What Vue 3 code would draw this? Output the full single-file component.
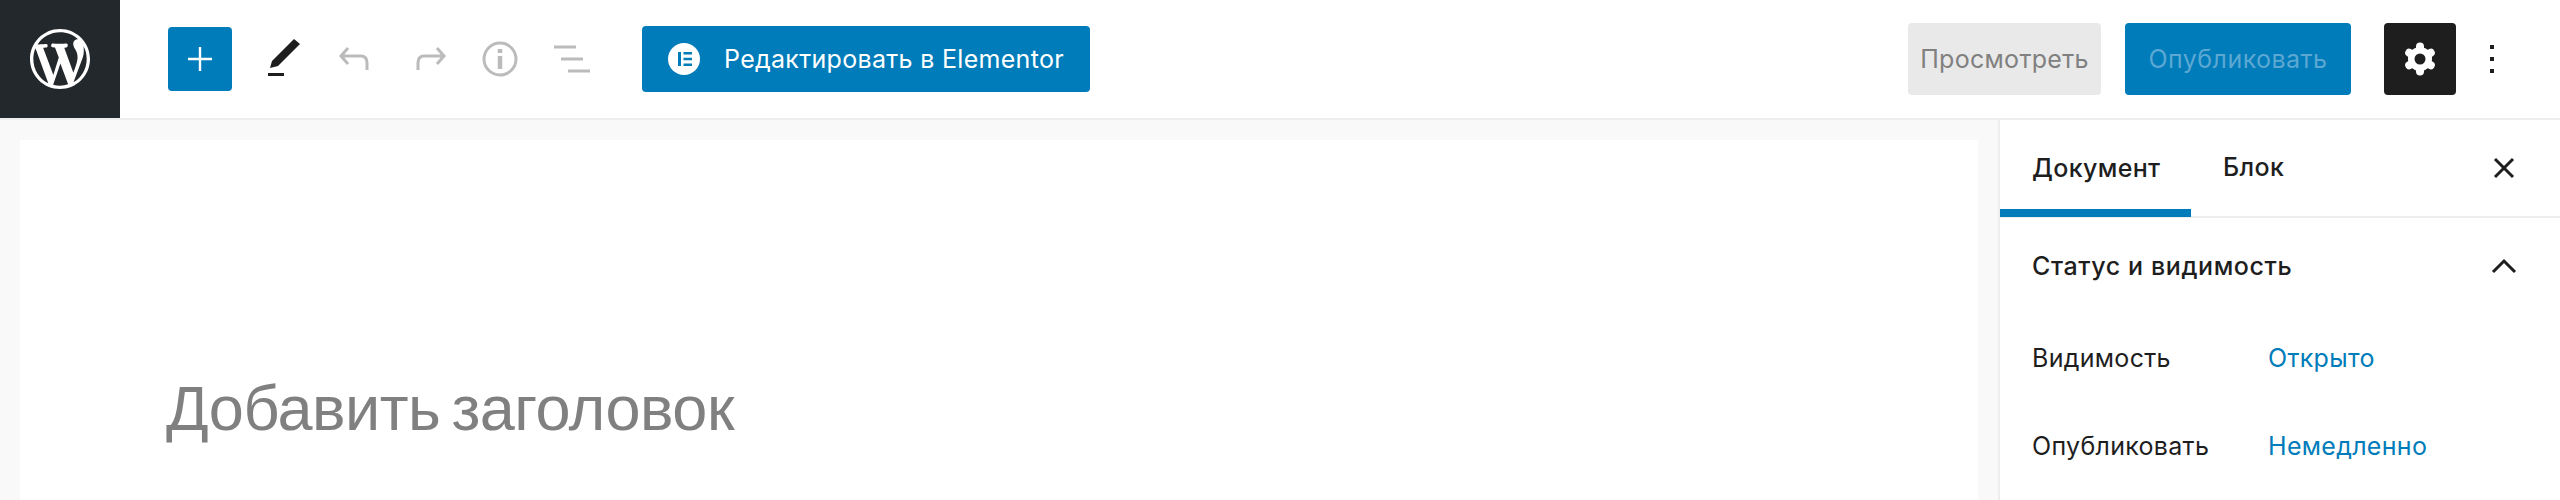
<script setup>
const rows = [
  { label: 'Видимость', value: 'Открыто' },
  { label: 'Опубликовать', value: 'Немедленно' },
]
</script>

<template>
  <div class="editor">
    <header class="topbar">
      <a class="logo">
        <svg width="60" height="60" viewBox="0 0 20 20" fill="#fff">
          <path d="M20 10c0-5.51-4.49-10-10-10C4.48 0 0 4.49 0 10c0 5.52 4.48 10 10 10 5.51 0 10-4.48 10-10zM7.78 15.37L4.37 6.22c.55-.02 1.17-.08 1.17-.08.5-.06.44-1.13-.06-1.11 0 0-1.45.11-2.37.11-.18 0-.37 0-.58-.01C4.12 2.69 6.87 1.11 10 1.11c2.33 0 4.45.87 6.05 2.34-.68-.11-1.65.39-1.65 1.58 0 .74.45 1.36.9 2.1.35.61.55 1.36.55 2.46 0 1.49-1.4 5-1.4 5l-3.03-8.37c.54-.02.82-.17.82-.17.5-.05.44-1.25-.06-1.22 0 0-1.44.12-2.38.12-.87 0-2.33-.12-2.33-.12-.5-.03-.56 1.2-.06 1.22l.92.08 1.26 3.41zM17.41 10c.24-.64.74-1.87.43-4.25.7 1.29 1.05 2.71 1.05 4.25 0 3.29-1.73 6.24-4.4 7.78.97-2.59 1.94-5.2 2.92-7.78zM6.1 18.09C3.12 16.65 1.11 13.53 1.11 10c0-1.3.23-2.48.72-3.59C3.25 10.3 4.67 14.2 6.1 18.09zm4.03-6.63l2.58 6.98c-.86.29-1.76.45-2.71.45-.79 0-1.57-.11-2.29-.33.81-2.38 1.62-4.74 2.42-7.1z"/>
        </svg>
      </a>
      <div class="tools">
        <button class="add">
          <svg width="48" height="48" viewBox="0 0 48 48" fill="#fff"><path d="M22.800 12h2.400v10.800H36v2.400H25.200V36h-2.400V25.200H12v-2.400h10.800z"/></svg>
        </button>
        <svg class="pen" width="48" height="48" viewBox="0 0 48 48" fill="#1e1e1e"><path d="M34 4l6 5-22 22-8 2 2-7zM8 38h16v3H8z"/></svg>
        <svg class="ico" width="48" height="48" viewBox="0 0 48 48"><path d="M16 13l-7 8 7 8M9 21h20c4 0 6 2.500 6 7v7"/></svg>
        <svg class="ico" width="48" height="48" viewBox="0 0 48 48"><path d="M33 13l7 8-7 8M40 21H20c-4 0-6 2.500-6 7v7"/></svg>
        <svg class="ico" width="48" height="48" viewBox="0 0 48 48"><circle cx="24" cy="24" r="16"/><path d="M24 14v4M24 21v13" stroke-width="4.500"/></svg>
        <svg class="ico" width="48" height="48" viewBox="0 0 48 48"><path d="M6 12h22M13 24h22M20 36h22"/></svg>
        <button class="elementor">
          <svg width="32" height="32" viewBox="0 0 32 32"><circle cx="16" cy="16" r="16" fill="#fff"/><path fill="#007cba" d="M10 9h3v14h-3zM15.500 9H24v2.500h-8.500zM15.500 14.800H24v2.400h-8.500zM15.500 20.500H24V23h-8.500z"/></svg>
          Редактировать в Elementor
        </button>
      </div>
      <div class="actions">
        <button class="preview">Просмотреть</button>
        <button class="publish">Опубликовать</button>
        <button class="settings">
          <svg width="40" height="40" viewBox="-20 -20 40 40">
            <g stroke="#fff" stroke-width="8" stroke-linecap="round">
              <path d="M0-12.500V12.500M-10.800-6.200L10.800 6.200M-10.800 6.200L10.800-6.200"/>
            </g>
            <circle r="12" fill="#fff"/>
            <circle r="5.500" fill="#1e1e1e"/>
          </svg>
        </button>
        <svg class="more" width="48" height="48" viewBox="0 0 48 48" fill="#1e1e1e"><path d="M22 10h4v4h-4zM22 22h4v4h-4zM22 34h4v4h-4z"/></svg>
      </div>
    </header>
    <div class="body">
      <main class="canvas">
        <div class="page">
          <h1 class="title">Добавить заголовок</h1>
        </div>
      </main>
      <aside class="sidebar">
        <div class="tabs">
          <div class="tab active">Документ</div>
          <div class="tab">Блок</div>
          <svg class="close" width="48" height="48" viewBox="0 0 48 48"><path d="M15 15l18 18M33 15L15 33"/></svg>
        </div>
        <div class="panel-head">
          <span>Статус и видимость</span>
          <svg class="chevron" width="48" height="48" viewBox="0 0 48 48"><path d="M13 30l11-11 11 11"/></svg>
        </div>
        <div v-for="row in rows" :key="row.label" class="row">
          <span class="label">{{ row.label }}</span>
          <span class="value">{{ row.value }}</span>
        </div>
      </aside>
    </div>
  </div>
</template>

<style scoped>
.editor {
  width: 2560px;
  height: 500px;
  overflow: hidden;
  font-family: Inter, Roboto, "Liberation Sans", sans-serif;
  letter-spacing: 0.3px;
  background: #fff;
}
button {
  font-family: inherit;
  letter-spacing: inherit;
  border: 0;
  padding: 0;
}
.topbar {
  display: flex;
  align-items: center;
  height: 118px;
  border-bottom: 2px solid #eee;
}
.logo {
  width: 120px;
  height: 118px;
  flex: none;
  background: #23282d;
  display: flex;
  align-items: center;
  justify-content: center;
}
.tools {
  display: flex;
  align-items: center;
  gap: 24px;
  padding-left: 48px;
}
.add {
  width: 64px;
  height: 64px;
  background: #007cba;
  border-radius: 4px;
  display: flex;
  align-items: center;
  justify-content: center;
}
.pen {
  margin-left: 4px;
}
.ico {
  fill: none;
  stroke: #bbb;
  stroke-width: 3;
}
.elementor {
  margin-left: 22px;
  width: 448px;
  height: 66px;
  background: #007cba;
  color: #fff;
  border-radius: 4px;
  font-size: 25px;
  display: flex;
  align-items: center;
  padding-left: 26px;
  gap: 24px;
}
.actions {
  margin-left: auto;
  display: flex;
  align-items: center;
  padding-right: 44px;
}
.preview {
  width: 193px;
  height: 72px;
  background: #e9e9e9;
  color: #808080;
  border-radius: 4px;
  font-size: 25px;
}
.publish {
  width: 226px;
  height: 72px;
  margin-left: 24px;
  background: #007cba;
  color: #5ca8d2;
  border-radius: 4px;
  font-size: 25px;
  letter-spacing: 0.45px;
}
.settings {
  width: 72px;
  height: 72px;
  margin-left: 33px;
  background: #1e1e1e;
  border-radius: 4px;
  display: flex;
  align-items: center;
  justify-content: center;
}
.more {
  margin-left: 12px;
}
.body {
  display: flex;
  height: 380px;
  background: #f9f9f9;
}
.canvas {
  flex: 1;
  padding: 20px 20px 0;
}
.page {
  height: 100%;
  background: #fff;
  padding: 231px 0 0 146px;
  box-sizing: border-box;
}
.title {
  margin: 0;
  font-family: "Liberation Sans", Arial, sans-serif;
  font-size: 63px;
  font-weight: 400;
  line-height: 1.2;
  letter-spacing: -0.5px;
  word-spacing: -6px;
  color: #808080;
}
.sidebar {
  width: 562px;
  flex: none;
  background: #fff;
  border-left: 2px solid #eee;
  box-sizing: border-box;
}
.tabs {
  display: flex;
  align-items: stretch;
  height: 96px;
  border-bottom: 2px solid #eee;
}
.tab {
  display: flex;
  align-items: center;
  padding: 0 32px 2px;
  font-size: 25px;
  font-weight: 500;
  color: #1e1e1e;
  box-sizing: border-box;
  letter-spacing: 0.35px;
}
.tab.active {
  width: 191px;
  border-bottom: 8px solid #007cba;
  padding: 6px 32px 0;
  margin-bottom: -1px;
}
.close {
  margin: 0 32px 0 auto;
  align-self: center;
  fill: none;
  stroke: #1e1e1e;
  stroke-width: 3;
}
.panel-head {
  display: flex;
  align-items: center;
  justify-content: space-between;
  height: 96px;
  padding: 0 32px;
  font-size: 25px;
  font-weight: 500;
  letter-spacing: 0.6px;
  color: #1e1e1e;
}
.chevron {
  fill: none;
  stroke: #1e1e1e;
  stroke-width: 3;
}
.row {
  display: flex;
  align-items: center;
  height: 88px;
  padding-left: 32px;
  font-size: 25px;
  color: #1e1e1e;
}
.label {
  width: 236px;
}
.value {
  color: #007cba;
}
</style>

<style>
body {
  margin: 0;
}
</style>
